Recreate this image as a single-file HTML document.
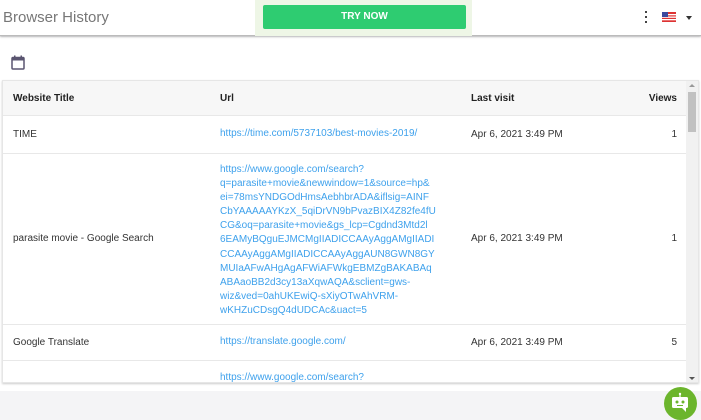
<!DOCTYPE html>
<html><head><meta charset="utf-8"><style>
*{margin:0;padding:0;box-sizing:border-box}
body{width:701px;height:420px;overflow:hidden;background:#f4f4f6;font-family:"Liberation Sans",sans-serif;position:relative}
.hdr{position:absolute;left:0;top:0;width:701px;height:36px;background:#fff;border-bottom:1px solid #bbb;box-shadow:0 1px 2px rgba(0,0,0,.25);z-index:2}
.ttl{position:absolute;left:3px;top:9px;font-size:15px;color:#777}
.promo{position:absolute;left:255px;top:0;width:217px;height:36px;background:#eef6e6}
.btn{position:absolute;left:263px;top:5px;width:203px;height:24px;background:#2ecc71;border-radius:2px;color:#fff;font-size:10px;font-weight:bold;text-align:center;line-height:24px}
.main{position:absolute;left:0;top:37px;width:701px;height:354px;background:#fff}
.card{position:absolute;left:2px;top:80px;width:697px;height:303px;border:1px solid #e6e6e6;box-shadow:0 1px 2px rgba(0,0,0,.2);background:#fff;overflow:hidden;font-size:10px;color:#333}
.row{position:absolute;left:0;width:685px;border-bottom:1px solid #e8e8e8}
.c{position:absolute}
.u{color:#3ea1ec;line-height:14.1px}
.sb{position:absolute;right:0;top:0;width:12px;height:303px;background:#f1f1f1}
</style></head><body>
<div class="main"></div>
<div class="hdr"><div class="ttl">Browser History</div>
<div class="promo"></div><div class="btn">TRY NOW</div>
<div style="position:absolute;left:645px;top:11px;width:3px;height:14px">
<div style="width:2px;height:2px;background:#444;margin-bottom:3px"></div><div style="width:2px;height:2px;background:#444;margin-bottom:3px"></div><div style="width:2px;height:2px;background:#444"></div></div>
<svg style="position:absolute;left:662px;top:12px" width="14" height="10"><rect width="14" height="10" fill="#d33"/><rect y="2" width="14" height="1.3" fill="#fff"/><rect y="4.5" width="14" height="1.3" fill="#fff"/><rect y="7" width="14" height="1.3" fill="#fff"/><rect width="6" height="5" fill="#3b4a9e"/></svg>
<div style="position:absolute;left:686px;top:16px;border-left:3px solid transparent;border-right:3px solid transparent;border-top:4px solid #333"></div>
</div>
<svg style="position:absolute;left:11px;top:55px" width="14" height="15" viewBox="0 0 14 15"><rect x="1" y="2.5" width="12" height="11.5" rx="1" fill="none" stroke="#5a5570" stroke-width="1.5"/><rect x="1" y="2.5" width="12" height="3" fill="#5a5570"/><rect x="3" y="0.5" width="1.5" height="3" fill="#5a5570"/><rect x="9.5" y="0.5" width="1.5" height="3" fill="#5a5570"/></svg>
<div class="card">
<div class="row" style="top:0;height:35px;background:#f7f7f7;font-weight:bold;color:#222">
<div class="c" style="left:10px;top:12px">Website Title</div><div class="c" style="left:217px;top:12px">Url</div><div class="c" style="left:468px;top:12px">Last visit</div><div class="c" style="right:11px;top:12px">Views</div></div>
<div class="row" style="top:35px;height:38px"><div class="c" style="left:10px;top:13px">TIME</div><div class="c u" style="left:217px;top:11px">https://time.com/5737103/best-movies-2019/</div><div class="c" style="left:468px;top:13px">Apr 6, 2021 3:49 PM</div><div class="c" style="right:11px;top:13px">1</div></div>
<div class="row" style="top:73px;height:171px"><div class="c" style="left:10px;top:79px">parasite movie - Google Search</div><div class="c u" style="left:217px;top:9px">https://www.google.com/search?<br>q=parasite+movie&amp;newwindow=1&amp;source=hp&amp;<br>ei=78msYNDGOdHmsAebhbrADA&amp;iflsig=AINF<br>CbYAAAAAYKzX_5qiDrVN9bPvazBIX4Z82fe4fU<br>CG&amp;oq=parasite+movie&amp;gs_lcp=Cgdnd3Mtd2l<br>6EAMyBQguEJMCMgIIADICCAAyAggAMgIIADI<br>CCAAyAggAMgIIADICCAAyAggAUN8GWN8GY<br>MUIaAFwAHgAgAFWiAFWkgEBMZgBAKABAq<br>ABAaoBB2d3cy13aXqwAQA&amp;sclient=gws-<br>wiz&amp;ved=0ahUKEwiQ-sXiyOTwAhVRM-<br>wKHZuCDsgQ4dUDCAc&amp;uact=5</div><div class="c" style="left:468px;top:79px">Apr 6, 2021 3:49 PM</div><div class="c" style="right:11px;top:79px">1</div></div>
<div class="row" style="top:244px;height:36px"><div class="c" style="left:10px;top:12px">Google Translate</div><div class="c u" style="left:217px;top:10px">https://translate.google.com/</div><div class="c" style="left:468px;top:12px">Apr 6, 2021 3:49 PM</div><div class="c" style="right:11px;top:12px">5</div></div>
<div class="row" style="top:280px;height:40px;border:0"><div class="c u" style="left:217px;top:10px">https://www.google.com/search?</div></div>
<div class="sb"><div style="position:absolute;left:2px;top:11px;width:8px;height:40px;background:#c1c1c1"></div>
<div style="position:absolute;left:3px;top:3px;border-left:3px solid transparent;border-right:3px solid transparent;border-bottom:3px solid #999"></div>
<div style="position:absolute;left:3px;bottom:4px;border-left:3px solid transparent;border-right:3px solid transparent;border-top:3px solid #555"></div></div>
</div>
<div style="position:absolute;left:664px;top:387px;width:33px;height:33px;border-radius:50%;background:#6cb52d"></div>
<svg style="position:absolute;left:670px;top:392px" width="20" height="22" viewBox="0 0 20 22"><circle cx="10" cy="2" r="1.2" fill="#fff"/><rect x="9.4" y="2" width="1.2" height="3" fill="#fff"/><rect x="2" y="5" width="16" height="11" rx="1.5" fill="#fff"/><path d="M12 16 L16 20 L16 16Z" fill="#fff"/><circle cx="7" cy="10" r="1.5" fill="#6cb52d"/><circle cx="13" cy="10" r="1.5" fill="#6cb52d"/><rect x="7" y="13" width="6" height="1" fill="#6cb52d"/></svg>
</body></html>
